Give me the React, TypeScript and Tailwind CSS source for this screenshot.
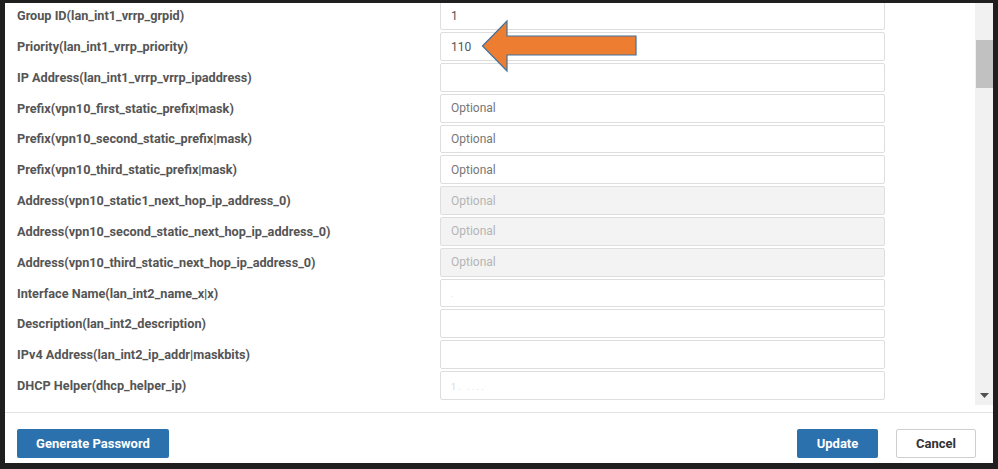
import React from 'react';

type Row = {
  label: string;
  value?: string;
  placeholder?: string;
  disabled?: boolean;
  faint?: string;
};

const rows: Row[] = [
  { label: 'Group ID(lan_int1_vrrp_grpid)', value: '1' },
  { label: 'Priority(lan_int1_vrrp_priority)', value: '110' },
  { label: 'IP Address(lan_int1_vrrp_vrrp_ipaddress)' },
  { label: 'Prefix(vpn10_first_static_prefix|mask)', placeholder: 'Optional' },
  { label: 'Prefix(vpn10_second_static_prefix|mask)', placeholder: 'Optional' },
  { label: 'Prefix(vpn10_third_static_prefix|mask)', placeholder: 'Optional' },
  { label: 'Address(vpn10_static1_next_hop_ip_address_0)', placeholder: 'Optional', disabled: true },
  { label: 'Address(vpn10_second_static_next_hop_ip_address_0)', placeholder: 'Optional', disabled: true },
  { label: 'Address(vpn10_third_static_next_hop_ip_address_0)', placeholder: 'Optional', disabled: true },
  { label: 'Interface Name(lan_int2_name_x|x)', faint: '.' },
  { label: 'Description(lan_int2_description)' },
  { label: 'IPv4 Address(lan_int2_ip_addr|maskbits)' },
  { label: 'DHCP Helper(dhcp_helper_ip)', faint: '1 .   . . . .' },
];

const FieldRow: React.FC<{ row: Row }> = ({ row }) => (
  <div className="flex items-center h-[28.8px]">
    <div className="w-[435px] pl-[12px] text-[12.7px] font-bold text-[#555] whitespace-nowrap">{row.label}</div>
    <div
      className={`w-[445px] h-full rounded-[2px] border border-[#dedede] flex items-center px-[10px] text-[12px] ${
        row.disabled ? 'bg-[#f3f3f3]' : 'bg-white'
      }`}
    >
      {row.value && <span className="text-[#555]">{row.value}</span>}
      {row.placeholder && (
        <span className={row.disabled ? 'text-[#b5b5b5]' : 'text-[#777]'}>{row.placeholder}</span>
      )}
      {row.faint && <span className="text-[#d6d6d6] text-[9px] mt-[4px] whitespace-pre">{row.faint}</span>}
    </div>
  </div>
);

export default function App() {
  return (
    <div
      className="w-[998px] h-[469px] bg-[#1f1f1f] pt-[3px] pl-[5px] overflow-hidden"
      style={{ fontFamily: 'Roboto, "Liberation Sans", sans-serif' }}
    >
      <div className="w-[988px] h-[460px] bg-white flex flex-col">
        <div className="h-[402px] flex">
          <div className="flex-1 relative overflow-hidden">
            <div className="flex flex-col gap-[2.03px] -mt-[1.7px]">
              {rows.map((r) => (
                <FieldRow key={r.label} row={r} />
              ))}
            </div>
            <svg className="absolute left-[472px] top-[14px]" width="164" height="58" viewBox="0 0 164 58">
              <polygon
                points="5.5,29 30,4 30,19 159,19 159,38 30,38 30,54"
                fill="#ed7d31"
                stroke="#41719c"
                strokeWidth="1.2"
                strokeLinejoin="miter"
              />
            </svg>
          </div>
          <div className="w-[18px] bg-[#f1f1f1] flex flex-col items-end">
            <div className="w-[17px] h-[48px] bg-[#c1c1c1] mt-[37px]" />
            <div className="flex-1" />
            <svg className="mb-[7px] mr-[4px]" width="9" height="5" viewBox="0 0 9 5">
              <polygon points="0,0 9,0 4.5,5" fill="#505050" />
            </svg>
          </div>
        </div>
        <div className="h-[7px]" />
        <div className="border-t border-[#e3e3e3] flex items-start pt-[16px] px-[12px]">
          <button className="h-[29px] w-[152px] rounded-[2px] bg-[#2b71ad] text-white text-[13px] font-bold">
            Generate Password
          </button>
          <div className="flex-1" />
          <button className="h-[29px] w-[81px] rounded-[2px] bg-[#2b71ad] text-white text-[13px] font-bold">
            Update
          </button>
          <button className="ml-[18px] h-[29px] w-[80px] rounded-[2px] bg-white border border-[#cfcfcf] text-[#333] text-[13px] font-bold">
            Cancel
          </button>
          <div className="w-[5px]" />
        </div>
      </div>
    </div>
  );
}
